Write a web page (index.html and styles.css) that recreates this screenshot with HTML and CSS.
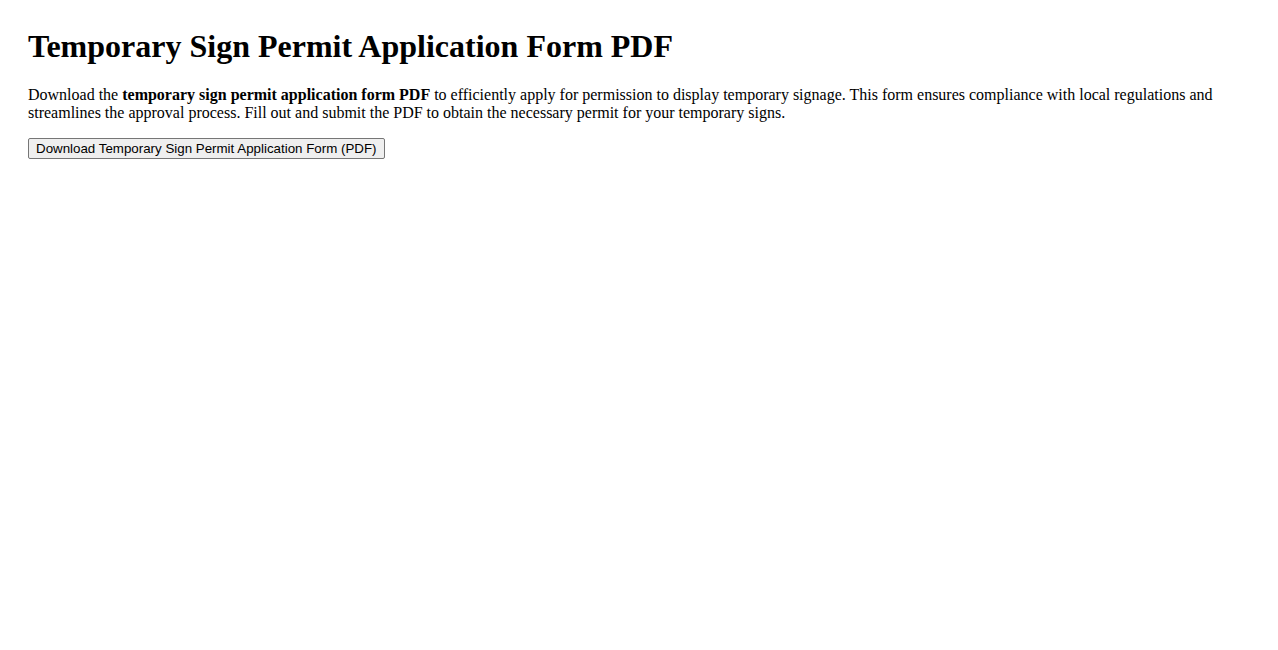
FILE: index.html
```html
<!DOCTYPE html>
<html lang="en">
<head>
    <meta charset="UTF-8">
    <meta name="viewport" content="width=device-width, initial-scale=1.0">
    <title>Temporary Sign Permit Application Form PDF</title>
    <link rel="stylesheet" href="styles.css">
</head>
<body>
    <div class="pagina">
        <h1>Temporary Sign Permit Application Form PDF</h1>
        <p>Download the <strong>temporary sign permit application form PDF</strong> to efficiently apply for permission to display temporary signage. This form ensures compliance with local regulations and streamlines the approval process. Fill out and submit the PDF to obtain the necessary permit for your temporary signs.</p>
        <button class="baixar">Download Temporary Sign Permit Application Form (PDF)</button>
    </div>
</body>
</html>
```

FILE: styles.css
```css
body {
    margin: 8px;
    font-family: "Liberation Serif", "Times New Roman", serif;
    color: #000;
    background-color: #fff;
}

.pagina {
    padding: 20px;
}

h1 {
    margin-top: 0;
}

.baixar {
    font-family: "Liberation Sans", Arial, sans-serif;
    font-size: 13.333px;
    color: #000;
    background-color: #efefef;
    border: 1px solid #767676;
    border-radius: 2px;
    padding: 2px 7px;
}
```
